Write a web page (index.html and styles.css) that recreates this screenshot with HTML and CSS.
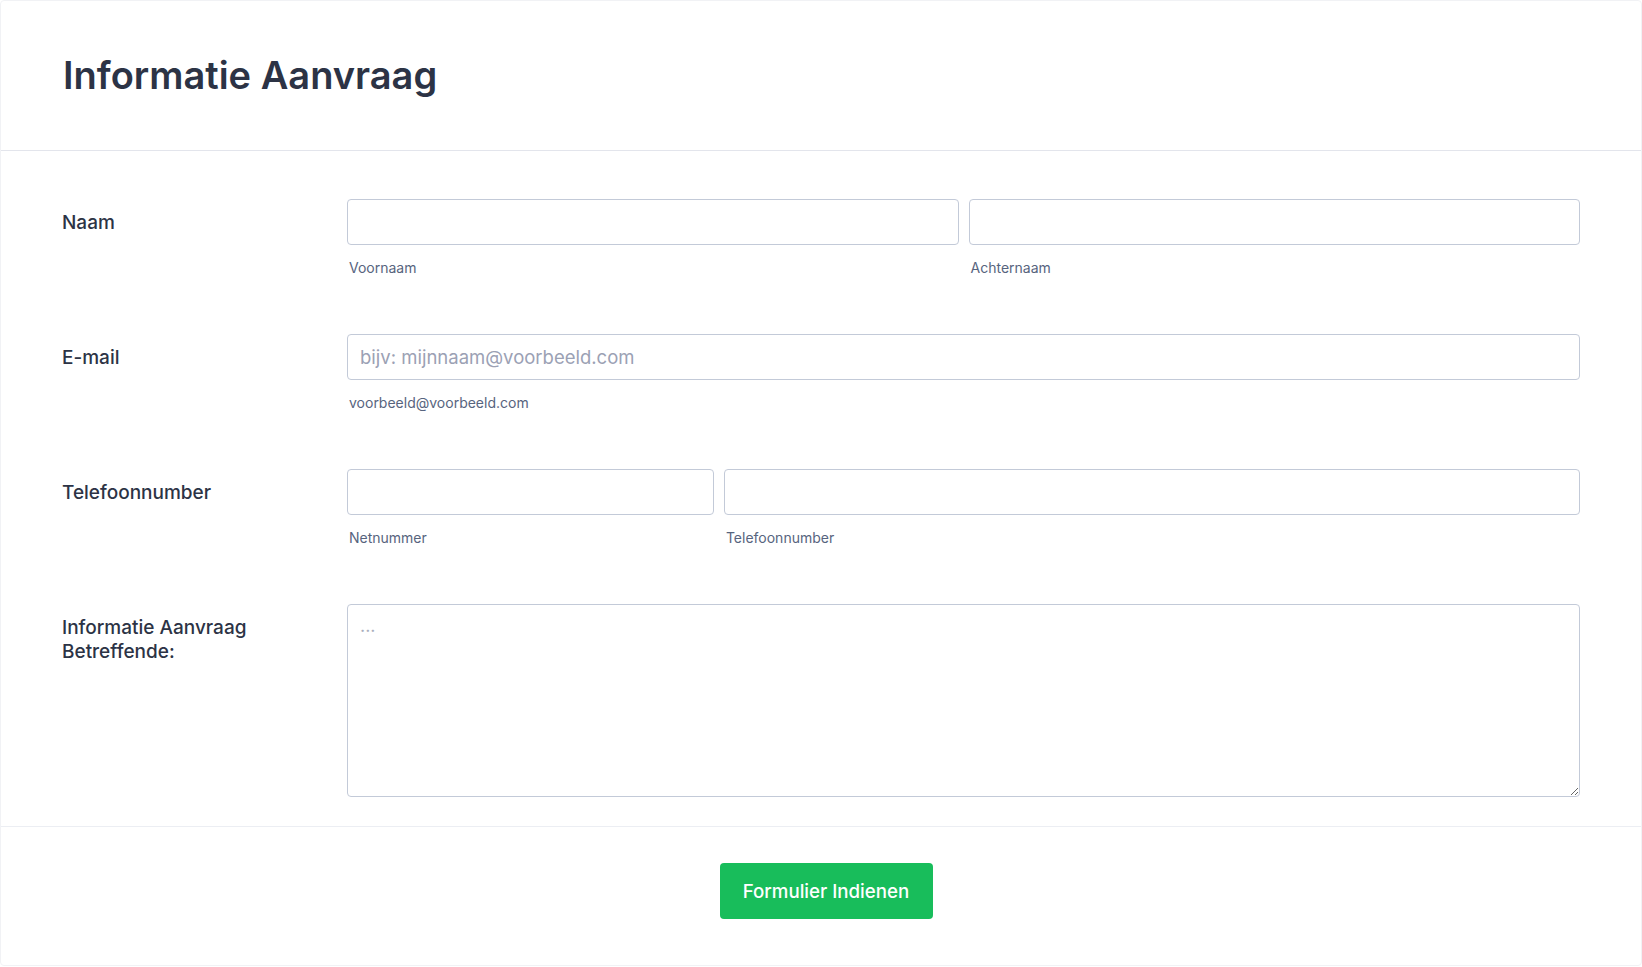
FILE: index.html
```html
<!DOCTYPE html>
<html lang="nl">
<head>
    <meta charset="UTF-8">
    <meta name="viewport" content="width=device-width, initial-scale=1.0">
    <title>Informatie Aanvraag</title>
    <link rel="stylesheet" href="styles.css">
</head>
<body>
    <form class="form-card">
        <!-- kop -->
        <div class="form-header">
            <h1>Informatie Aanvraag</h1>
        </div>

        <div class="form-body">
            <div class="form-row">
                <label class="form-label">Naam</label>
                <div class="inputs two-col">
                    <div class="field">
                        <input type="text" class="text-input">
                        <span class="sublabel">Voornaam</span>
                    </div>
                    <div class="field">
                        <input type="text" class="text-input">
                        <span class="sublabel">Achternaam</span>
                    </div>
                </div>
            </div>

            <div class="form-row">
                <label class="form-label">E-mail</label>
                <div class="inputs">
                    <div class="field">
                        <input type="email" class="text-input" placeholder="bijv: mijnnaam@voorbeeld.com">
                        <span class="sublabel">voorbeeld@voorbeeld.com</span>
                    </div>
                </div>
            </div>

            <div class="form-row">
                <label class="form-label">Telefoonnumber</label>
                <div class="inputs phone-col">
                    <div class="field">
                        <input type="tel" class="text-input">
                        <span class="sublabel">Netnummer</span>
                    </div>
                    <div class="field">
                        <input type="tel" class="text-input">
                        <span class="sublabel">Telefoonnumber</span>
                    </div>
                </div>
            </div>

            <div class="form-row last">
                <label class="form-label">Informatie Aanvraag<br>Betreffende:</label>
                <div class="inputs">
                    <textarea class="text-area" placeholder="..."></textarea>
                </div>
            </div>
        </div>

        <div class="form-footer">
            <button type="button" class="submit-button">Formulier Indienen</button>
        </div>
    </form>
</body>
</html>
```

FILE: styles.css
```css
/* algemeen */
body {
    margin: 0;
    font-family: Inter, "Noto Sans", sans-serif;
    color: #2c3345;
    background-color: #fff;
}

.form-card {
    border: 1px solid #f1f2f5;
    border-radius: 4px;
    min-height: 965px;
    box-sizing: border-box;
}

/* kop */
.form-header {
    padding: 52px 62px 53px;
    border-bottom: 1px solid #e3e5ec;
}

.form-header h1 {
    margin: 0;
    font-size: 38px;
    line-height: 44px;
    font-weight: 600;
}

/* velden */
.form-body {
    padding: 48px 61px 0 61px;
    border-bottom: 1px solid #eceef3;
}

.form-row {
    display: grid;
    grid-template-columns: 285px 1fr;
    padding-bottom: 57px;
}

.form-row.last {
    padding-bottom: 29px;
}

.form-label {
    font-size: 19px;
    line-height: 24px;
    font-weight: 450;
    padding-top: 12px;
}

.inputs {
    display: grid;
    gap: 10px;
}

.two-col {
    grid-template-columns: 1fr 1fr;
}

.phone-col {
    grid-template-columns: 3fr 7fr;
}

.field {
    display: flex;
    flex-direction: column;
}

.text-input {
    height: 46px;
    box-sizing: border-box;
    border: 1px solid #c3cad8;
    border-radius: 4px;
    padding: 0 12px;
    font-family: inherit;
    font-size: 18.5px;
    color: #2c3345;
}

.text-input::placeholder {
    color: #9ba1b4;
}

.sublabel {
    margin-top: 14px;
    padding-left: 2px;
    font-size: 14px;
    line-height: 18px;
    color: #57647e;
}

.text-area {
    height: 193px;
    box-sizing: border-box;
    border: 1px solid #c3cad8;
    border-radius: 4px;
    padding: 10px 12px;
    font-family: inherit;
    font-size: 18px;
    resize: vertical;
}

.text-area::placeholder {
    color: #a9aebd;
}

/* knop */
.form-footer {
    display: flex;
    justify-content: center;
    padding: 36px 0 46px 10px;
}

.submit-button {
    width: 213px;
    height: 56px;
    border: none;
    border-radius: 4px;
    background-color: #18bd5b;
    color: #fff;
    font-family: inherit;
    font-size: 18.7px;
    font-weight: 450;
    cursor: pointer;
}
```
